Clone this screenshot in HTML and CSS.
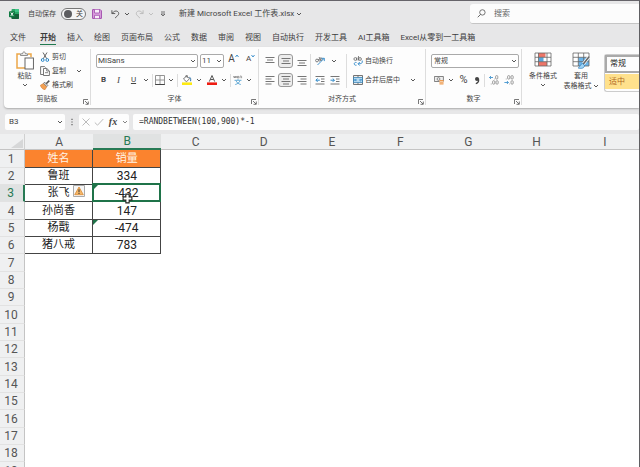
FILE: index.html
```html
<!DOCTYPE html>
<html lang="zh-CN">
<head>
<meta charset="utf-8">
<title>新建 Microsoft Excel 工作表.xlsx</title>
<link rel="stylesheet" href="styles.css">
</head>
<body>
<svg class="defs" aria-hidden="true">
  <symbol id="chev" viewBox="0 0 6 6"><path d="M1 2l2 2 2-2" fill="none" stroke="currentColor" stroke-width=".9"/></symbol>
  <symbol id="launch" viewBox="0 0 6 6"><path d="M.5 5V.5H5M2 2l3 3M5.300 2.500V5.300H2.500" fill="none" stroke="#555" stroke-width=".8"/></symbol>
</svg>
<div class="app">
  <header class="titlebar">
    <svg class="logo" viewBox="0 0 10 10"><rect x="2.500" width="7.500" height="10" rx="1" fill="#27a565"/><path d="M6 0h3a1 1 0 011 1v2H6z" fill="#3ec486"/><path d="M2.500 5H10v4a1 1 0 01-1 1H3.500a1 1 0 01-1-1z" fill="#15613a"/><rect y="2.200" width="6" height="6" rx=".8" fill="#0f7a42"/><path d="M1.800 3.500l2.400 3.400M4.200 3.500L1.800 6.900" stroke="#fff" stroke-width=".9"/></svg>
    <label class="autosave">自动保存<input type="checkbox" class="switch-input"><span class="switch"><i></i>关</span></label>
    <button class="qat save" aria-label="保存"><svg viewBox="0 0 10 10"><path d="M.6.6h7.600l1.200 1.200v7.600H.6z" fill="#dda4df" stroke="#a04bad" stroke-width="1"/><path d="M2.500.8v3.200h5V.8M2.500 9.300V6.300h5v3" fill="#f8eef8" stroke="#a04bad" stroke-width=".8"/></svg></button>
    <button class="qat" aria-label="撤消"><svg viewBox="0 0 10 10"><path d="M1 .8v3.700h3.700M1.200 4.300C3 2 5.300.9 7.300 2.200 9.300 3.700 8.700 5.600 7.300 6.900L4.500 9.500" fill="none" stroke="#505050"/></svg></button>
    <button class="chev" aria-label="撤消选项"><svg><use href="#chev"/></svg></button>
    <button class="qat off" aria-label="恢复"><svg viewBox="0 0 10 10"><path d="M9 .8v3.700H5.300M8.800 4.300C7 2 4.700.9 2.700 2.200.7 3.700 1.300 5.600 2.700 6.900L5.500 9.500" fill="none" stroke="#b9b9b9"/></svg></button>
    <button class="chev off" aria-label="恢复选项"><svg><use href="#chev"/></svg></button>
    <button class="chev custom" aria-label="自定义快速访问工具栏"><svg viewBox="0 0 6 6"><path d="M1 1h4M1 3h4L3 5z" fill="none" stroke="#555" stroke-width=".8"/></svg></button>
    <button class="filename">新建 Microsoft Excel 工作表.xlsx<svg><use href="#chev"/></svg></button>
    <label class="search"><svg viewBox="0 0 10 10"><circle cx="6" cy="3.800" r="3" fill="none" stroke="#555" stroke-width=".9"/><path d="M4 6L.8 9.200" stroke="#555"/></svg><input type="search" placeholder="搜索" aria-label="搜索"></label>
  </header>

  <nav class="tabs">
    <a href="#" class="file">文件</a><a href="#" class="active">开始</a><a href="#">插入</a><a href="#">绘图</a><a href="#">页面布局</a><a href="#">公式</a><a href="#">数据</a><a href="#">审阅</a><a href="#">视图</a><a href="#">自动执行</a><a href="#">开发工具</a><a href="#">AI工具箱</a><a href="#">Excel从零到一工具箱</a>
  </nav>

  <section class="ribbon">
    <div class="group clipboard">
      <div class="body">
        <button class="big"><svg viewBox="0 0 18 19"><path d="M4 3H1v14h8M12 3h3v3" fill="none" stroke="#eba648" stroke-width="1.500"/><path d="M4.500 4.500V2.800h2C6.500.3 9.500.3 9.500 2.800h2v1.700z" fill="#eee" stroke="#777" stroke-width=".8"/><rect x="9" y="7" width="8.400" height="11" fill="#fff" stroke="#555" stroke-width=".9"/></svg><span>粘贴</span><svg class="v"><use href="#chev"/></svg></button>
        <div class="stack">
          <button class="cmd"><svg viewBox="0 0 10 10"><path d="M3 .5l3.800 6.300M7 .5L3.200 6.800" stroke="#555" stroke-width=".9"/><circle cx="2.700" cy="8" r="1.400" fill="none" stroke="#2b87c8"/><circle cx="7.300" cy="8" r="1.400" fill="none" stroke="#2b87c8"/></svg>剪切</button>
          <button class="cmd"><svg viewBox="0 0 10 10"><path d="M3 8.500H.6V.6h4l1 1" fill="none" stroke="#555" stroke-width=".8"/><path d="M3.500 2.500h3.300L9.400 5v4.500H3.500z" fill="#fff" stroke="#555" stroke-width=".8"/><path d="M6.700 2.600V5h2.600M5 6.700h3" fill="none" stroke="#555" stroke-width=".7"/></svg>复制<svg class="v far"><use href="#chev"/></svg></button>
          <button class="cmd"><svg viewBox="0 0 10 10"><path d="M.4 5.300l3.100-1.800 3.300 3.200L5 9.700C3 9.700.8 7.500.4 5.300z" fill="#f2a052" stroke="#c96b22" stroke-width=".5"/><path d="M3.600 3.200l1-1 3.200 3.200-1 1z" fill="#fff" stroke="#555" stroke-width=".8"/><path d="M6.200 3.700L9.300.6" stroke="#555" stroke-width="1.600"/></svg>格式刷</button>
        </div>
      </div>
      <footer>剪贴板<button class="launcher" aria-label="剪贴板设置"><svg><use href="#launch"/></svg></button></footer>
    </div>

    <div class="group font">
      <div class="body rows">
        <div class="row top">
          <span class="combo family"><select aria-label="字体"><option>MiSans</option></select><svg><use href="#chev"/></svg></span>
          <span class="combo size"><select aria-label="字号"><option>11</option></select><svg><use href="#chev"/></svg></span>
          <button class="tool wide grow" aria-label="增大字号">A<svg viewBox="0 0 4 4"><path d="M.5 3L2 1l1.500 2" fill="none" stroke="#2b87c8" stroke-width=".9"/></svg></button>
          <button class="tool wide shrink" aria-label="减小字号">A<svg viewBox="0 0 4 4"><path d="M.5 1L2 3l1.500-2" fill="none" stroke="#2b87c8" stroke-width=".9"/></svg></button>
        </div>
        <div class="row">
          <button class="tool bold">B</button><button class="tool italic">I</button><button class="tool under">U</button><button class="chev" aria-label="下划线样式"><svg><use href="#chev"/></svg></button>
          <i class="sep"></i>
          <button class="tool slim" aria-label="边框"><svg viewBox="0 0 10 10"><path d="M.5.5h9v9h-9zM5 .5v9M.5 5h9" fill="none" stroke="#888" stroke-width=".9"/><path d="M.2 9.500h9.600" stroke="#444"/></svg></button><button class="chev" aria-label="边框样式"><svg><use href="#chev"/></svg></button>
          <i class="sep"></i>
          <button class="tool" aria-label="填充颜色"><svg viewBox="0 0 10 10"><path d="M4.300 1L1.500 4l3 2.800L7.600 3.600z" fill="#fff" stroke="#555" stroke-width=".8"/><path d="M4 2.300V.3h1.300v2.500" fill="none" stroke="#555" stroke-width=".6"/><path d="M7.400 2.300c1.300 0 1.500 2 1.200 3.900" fill="none" stroke="#2b6fa8"/><path d="M0 7.400h10V10H0z" fill="#fdea12"/></svg></button><button class="chev" aria-label="选择填充颜色"><svg><use href="#chev"/></svg></button>
          <button class="tool" aria-label="字体颜色"><svg viewBox="0 0 10 10"><path d="M2.300 6.600L5 .5l2.700 6.100M3.300 4.500h3.400" fill="none" stroke="#555"/><path d="M0 7.400h10V10H0z" fill="#ee1c12"/></svg></button><button class="chev" aria-label="选择字体颜色"><svg><use href="#chev"/></svg></button>
          <i class="sep"></i>
          <button class="tool slim" aria-label="拼音"><svg viewBox="0 0 10 10"><path d="M.5 1l.8 2 .8-2 .8 2 .6-2M4.200 2.200h1.600c0-1.600-1.600-1.300-1.600 0s1.200 1 1.600.6M7 3.200V1.400c.8-.8 1.600-.4 1.600.3v1.500" fill="none" stroke="#777" stroke-width=".7"/><path d="M1.500 5.300h7M5 4.200v1M3 5.500c.7 2 2.300 3.500 4.800 4M7 5.500c-.7 2-2.300 3.500-4.800 4" fill="none" stroke="#5aa5d2" stroke-width=".9"/></svg></button><button class="chev" aria-label="拼音选项"><svg><use href="#chev"/></svg></button>
        </div>
      </div>
      <footer>字体<button class="launcher" aria-label="字体设置"><svg><use href="#launch"/></svg></button></footer>
    </div>

    <div class="group align">
      <div class="body">
        <div class="rows">
          <div class="row top gap">
            <button class="tool" aria-label="顶端对齐"><svg viewBox="0 0 10 10"><path d="M.5 1.500h9M2 4h6M.5 6.500h9" stroke="#666" stroke-width=".9"/></svg></button>
            <button class="tool on" aria-label="垂直居中"><svg viewBox="0 0 10 10"><path d="M.5 2.500h9M2 5h6M.5 7.500h9" stroke="#666" stroke-width=".9"/></svg></button>
            <button class="tool" aria-label="底端对齐"><svg viewBox="0 0 10 10"><path d="M.5 4.500h9M2 7h6M.5 9.500h9" stroke="#666" stroke-width=".9"/></svg></button>
          </div>
          <div class="row gap">
            <button class="tool" aria-label="左对齐"><svg viewBox="0 0 10 10"><path d="M.5 1.500h9M.5 4h6M.5 6.500h9M.5 9h6" stroke="#666" stroke-width=".9"/></svg></button>
            <button class="tool on" aria-label="居中"><svg viewBox="0 0 10 10"><path d="M.5 1.500h9M2 4h6M.5 6.500h9M2 9h6" stroke="#666" stroke-width=".9"/></svg></button>
            <button class="tool" aria-label="右对齐"><svg viewBox="0 0 10 10"><path d="M.5 1.500h9M3.500 4h6M.5 6.500h9M3.500 9h6" stroke="#666" stroke-width=".9"/></svg></button>
          </div>
        </div>
        <i class="sep tall"></i>
        <div class="rows indent">
          <div class="row top">
            <button class="tool" aria-label="方向"><svg viewBox="0 0 10 10"><circle cx="2" cy="4.500" r="1.400" fill="none" stroke="#666" stroke-width=".8"/><path d="M3.200 3l1.300 2.500M4 1l2 3.500" stroke="#666" stroke-width=".8"/><circle cx="5.900" cy="3.200" r="1.300" fill="none" stroke="#666" stroke-width=".8"/><path d="M2.500 9L9 2.500M6.500 2.300h2.800v2.800" fill="none" stroke="#2b87c8" stroke-width=".9"/></svg></button><button class="chev" aria-label="方向选项"><svg><use href="#chev"/></svg></button>
          </div>
          <div class="row">
            <button class="tool" aria-label="减少缩进"><svg viewBox="0 0 10 10"><path d="M.5 1.500h9M6 4h3.500M6 6.500h3.500M.5 9h9" stroke="#666" stroke-width=".9"/><path d="M4.800 5.200H1M2.600 3.500L.9 5.200l1.700 1.700" fill="none" stroke="#2b87c8"/></svg></button>
            <button class="tool" aria-label="增加缩进"><svg viewBox="0 0 10 10"><path d="M.5 1.500h9M6 4h3.500M6 6.500h3.500M.5 9h9" stroke="#666" stroke-width=".9"/><path d="M.5 5.200h3.800M2.700 3.500l1.700 1.700-1.700 1.700" fill="none" stroke="#2b87c8"/></svg></button>
          </div>
        </div>
        <i class="sep tall"></i>
        <div class="rows merge">
          <div class="row top"><button class="cmd"><svg viewBox="0 0 10 10"><circle cx="2.300" cy="3" r="1.400" fill="none" stroke="#666" stroke-width=".8"/><path d="M3.900 1.500v3M5.500 0v4.500" stroke="#666" stroke-width=".8"/><circle cx="7" cy="3" r="1.400" fill="none" stroke="#666" stroke-width=".8"/><path d="M3.500 6.500c-3-.8-3 3.300 0 2.700M9.200 4.500c.6 3-1 3.300-4 3.300M6.800 6L5 7.800l1.800 1.800" fill="none" stroke="#2b87c8" stroke-width=".9"/></svg>自动换行</button></div>
          <div class="row"><button class="cmd"><svg viewBox="0 0 10 10"><path d="M.5.5h9v9h-9zM5 .5v2M5 7.500v2" fill="#eee" stroke="#666" stroke-width=".9"/><path d="M.5 2.600h9v4.800h-9z" fill="#c6e3f7" stroke="#2b7bb0" stroke-width=".8"/><path d="M1.500 5h2.700M5.800 5h2.700M2.600 3.900L1.500 5l1.100 1.100M7.400 3.900L8.500 5 7.400 6.100" fill="none" stroke="#1878bd" stroke-width=".8"/></svg>合并后居中<svg class="v far"><use href="#chev"/></svg></button></div>
        </div>
      </div>
      <footer>对齐方式<button class="launcher" aria-label="对齐设置"><svg><use href="#launch"/></svg></button></footer>
    </div>

    <div class="group number">
      <div class="body rows">
        <div class="row top"><span class="combo format"><select aria-label="数字格式"><option>常规</option></select><svg><use href="#chev"/></svg></span></div>
        <div class="row">
          <button class="tool" aria-label="会计数字格式"><svg viewBox="0 0 10 10"><path d="M.4 1.500h9v5h-9z" fill="#eee" stroke="#666" stroke-width=".8"/><circle cx="4.500" cy="4" r="1.400" fill="none" stroke="#666" stroke-width=".7"/><path d="M5.500 5h4v4.500h-4z" fill="#ee9a4d"/><path d="M5.500 6.500h4M5.500 8h4" stroke="#fff" stroke-width=".5"/></svg></button><button class="chev" aria-label="货币选项"><svg><use href="#chev"/></svg></button>
          <button class="tool percent">%</button><button class="tool slim" aria-label="千位分隔样式"><svg viewBox="0 0 10 10"><circle cx="5" cy="4" r="2" fill="#444"/><path d="M6.500 3.500C7 6 6 8 3.800 8.700" fill="none" stroke="#444" stroke-width="1.200"/></svg></button>
          <i class="sep"></i>
          <button class="tool" aria-label="增加小数位数"><svg viewBox="0 0 10 10"><path d="M4 2.500H.5M2 1L.5 2.500 2 4" fill="none" stroke="#2b87c8" stroke-width=".8"/><g fill="none" stroke="#777" stroke-width=".7"><rect x="6.600" y=".6" width="2.200" height="3.500" rx="1"/><rect x="3.600" y="5.700" width="2.200" height="3.500" rx="1"/><rect x="7" y="5.700" width="2.200" height="3.500" rx="1"/><path d="M1.800 9h.8M5 4h.6"/></g></svg></button>
          <button class="tool" aria-label="减少小数位数"><svg viewBox="0 0 10 10"><path d="M.4 7.500H4.300M2.900 6l1.500 1.500L2.900 9" fill="none" stroke="#2b87c8" stroke-width=".8"/><g fill="none" stroke="#777" stroke-width=".7"><rect x="3.600" y=".6" width="2.200" height="3.500" rx="1"/><rect x="7" y=".6" width="2.200" height="3.500" rx="1"/><rect x="7" y="5.700" width="2.200" height="3.500" rx="1"/><path d="M1.800 4h.8M5.400 9h.6"/></g></svg></button>
        </div>
      </div>
      <footer>数字<button class="launcher" aria-label="数字设置"><svg><use href="#launch"/></svg></button></footer>
    </div>

    <div class="group styles">
      <div class="body">
        <button class="big"><svg viewBox="0 0 18 19"><path d="M1 2h16v13H1z" fill="#fff"/><path d="M4.500 2h7v4.300h-7zM4.500 10.700H13V15H4.500z" fill="#ec7568"/><path d="M4.500 6.300h5v4.400h-5z" fill="#58a7dc"/><path d="M1 2h16v13H1zM1 6.300h16M1 10.700h16M4.500 2v13M13 2v13" fill="none" stroke="#666" stroke-width=".8"/></svg><span>条件格式</span><svg class="v"><use href="#chev"/></svg></button>
        <button class="big"><svg viewBox="0 0 18 19"><path d="M1 2h16v13H1z" fill="#fff"/><path d="M6.300 6.300H17V15H6.300z" fill="#69b4ea"/><path d="M1 2h16v13H1zM1 6.300h16M1 10.700h16M6.300 2v13M11.700 2v13" fill="none" stroke="#666" stroke-width=".8"/><path d="M17.300 5.500l-6 7.500" stroke="#fff" stroke-width="3"/><path d="M17.300 5.500l-6 7.500" stroke="#666" stroke-width="1.600"/><path d="M10.500 12.500c-2 .2-2 3-4.300 4.500 3 1 6.400.3 6.300-2.800z" fill="#9ed3f5" stroke="#2b79b5" stroke-width=".7"/></svg><span>套用</span><span class="line">表格格式<svg><use href="#chev"/></svg></span></button>
        <div class="gallery"><button class="normal">常规</button><button class="neutral">适中</button></div>
      </div>
    </div>
  </section>

  <section class="formula">
    <label class="field name"><input value="B3" aria-label="名称框"><svg><use href="#chev"/></svg></label>
    <svg class="dots" viewBox="0 0 4 10"><path d="M1.300 1h1.400v1.400H1.300zM1.300 4.300h1.400v1.400H1.300zM1.300 7.600h1.400V9H1.300z" fill="#555"/></svg>
    <div class="field actions">
      <button aria-label="取消"><svg viewBox="0 0 10 10"><path d="M1.500 1.500l7 7M8.500 1.500l-7 7" stroke="#bbb"/></svg></button>
      <button aria-label="输入"><svg viewBox="0 0 10 10"><path d="M.8 5.500l2.700 2.700L9.300 2" fill="none" stroke="#bbb"/></svg></button>
      <button class="fx">fx</button>
      <svg class="v"><use href="#chev"/></svg>
    </div>
    <input class="field expr" value="=RANDBETWEEN(100,900)*-1" aria-label="编辑栏">
  </section>

  <main class="sheet">
    <table>
      <thead><tr><th class="corner"><svg viewBox="0 0 12 9"><path d="M12 0v9H0z" fill="#d6d7d8"/></svg></th><th>A</th><th class="cur">B</th><th>C</th><th>D</th><th>E</th><th>F</th><th>G</th><th>H</th><th>I</th></tr></thead>
      <tbody>
        <tr class="head"><th>1</th><td>姓名</td><td>销量</td></tr>
        <tr class="data"><th>2</th><td>鲁班</td><td>334</td></tr>
        <tr class="data"><th class="cur">3</th><td>张飞</td><td class="selected flag">-432<svg class="warn" viewBox="0 0 12 12"><path d="M.5.5h11v11H.5z" fill="#f6f6f6" stroke="#aaa"/><path d="M6 2L10.300 9.700H1.700z" fill="#f5b667" stroke="#d98a35" stroke-width=".8"/><path d="M6 4.300v3M6 8v1" stroke="#333"/></svg><svg class="pointer" viewBox="0 0 10 10"><path d="M3.500 1h3v2.500H9v3H6.500V9h-3V6.500H1v-3h2.500z" fill="#fff" stroke="#222"/></svg></td></tr>
        <tr class="data"><th>4</th><td>孙尚香</td><td>147</td></tr>
        <tr class="data"><th>5</th><td>杨戬</td><td class="flag">-474</td></tr>
        <tr class="data"><th>6</th><td>猪八戒</td><td>783</td></tr>
        <tr><th>7</th></tr><tr><th>8</th></tr><tr><th>9</th></tr><tr><th>10</th></tr><tr><th>11</th></tr><tr><th>12</th></tr><tr><th>13</th></tr><tr><th>14</th></tr><tr><th>15</th></tr><tr><th>16</th></tr><tr><th>17</th></tr><tr><th>18</th></tr><tr><th>19</th></tr>
      </tbody>
    </table>
  </main>
</div>
</body>
</html>
```
FILE: styles.css
```css
* { box-sizing: border-box; }
html, body { height: 100%; }
body {
  margin: 0;
  overflow: hidden;
  font: 7px/10px Roboto, "Noto Sans CJK SC", sans-serif;
  color: #444;
}
button, input, select { font: inherit; color: inherit; border: 0; padding: 0; margin: 0; background: none; outline: 0; }
button { display: flex; align-items: center; justify-content: center; white-space: nowrap; }
svg { display: block; flex: none; width: 6px; height: 6px; }
i { font-style: normal; }
.defs { position: absolute; width: 0; height: 0; }
.app {
  display: flex;
  flex-direction: column;
  height: 100vh;
  overflow: hidden;
  background: #e7e7e8;
  border-top: 1px solid #66646a;
  border-right: 1px solid #5f5f62;
}

/* title bar */
.titlebar { display: flex; align-items: center; height: 26px; padding-left: 9px; flex: none; }
.logo { width: 10px; height: 10px; }
.autosave { display: flex; align-items: center; margin-left: 9px; gap: 5px; }
.switch-input { position: absolute; opacity: 0; width: 1px; height: 1px; }
.switch { display: flex; align-items: center; gap: 4px; width: 25px; height: 12px; padding-left: 2px; border: 1px solid #777; border-radius: 6px; background: #f5f5f5; }
.switch i { width: 8px; height: 8px; border-radius: 50%; background: #5d5d60; }
.qat { width: 14px; height: 14px; }
.qat svg { width: 9px; height: 10px; }
.save { margin: 0 4px; }
.save svg { width: 10px; }
.chev { width: 10px; height: 14px; }
.off { color: #bbb; }
.custom { margin-left: 2px; }
.filename { margin-left: 11px; font-size: 8px; gap: 2px; }
.search { display: flex; align-items: center; gap: 8px; margin-left: auto; width: 169px; height: 20px; padding-left: 7px; background: #fcfcfc; border-radius: 3px 0 0 3px; border-bottom: 1px solid #c5c5c5; }
.search svg { width: 9px; height: 9px; }
.search input { flex: 1; min-width: 0; font-size: 8px; }
.search input::placeholder { color: #666; opacity: 1; }

/* tabs */
.tabs { display: flex; flex: none; gap: 11px; height: 20px; padding: 5px 10px 0; font-size: 8px; line-height: 11px; white-space: nowrap; }
.tabs a { height: 13px; color: #3c3c3c; text-decoration: none; }
.tabs .file { margin-right: 3px; }
.tabs .active { font-weight: 700; border-bottom: 1px solid #217a50; }

/* ribbon */
.ribbon { display: flex; flex: none; height: 61px; margin-left: 4px; padding: 2px 0 3px; background: #fdfdfd; border-radius: 4px 0 0 4px; box-shadow: 0 1px 2px #aaa; }
.group { position: relative; display: flex; flex-direction: column; flex: none; border-right: 1px solid #ddd; }
.body { display: flex; flex: 1; }
.group footer { height: 12px; line-height: 12px; text-align: center; }
.launcher { position: absolute; right: 1px; bottom: 0; }
.clipboard { width: 87px; }
.font { width: 168px; }
.align { width: 167px; }
.number { width: 96px; }
.styles { flex: 1; border: 0; }
.big { flex-direction: column; justify-content: flex-start; padding-top: 2px; line-height: 10px; }
.big > svg:first-child { width: 18px; height: 19px; margin-bottom: 1px; }
.big .v { margin-top: 1px; }
.clipboard .big { width: 42px; padding-right: 1px; }
.stack { display: flex; flex-direction: column; justify-content: space-between; padding: 1px 0; }
.cmd { justify-content: flex-start; height: 14px; gap: 2px; }
.cmd > svg:first-child { width: 10px; height: 10px; }
.stack .cmd { margin-left: -6px; }
.far { margin-left: 8px; }
.rows { display: flex; flex-direction: column; gap: 5px; padding-top: 5px; }
.row { display: flex; align-items: center; height: 14px; }
.font .rows { padding-left: 5px; }
.top { gap: 2px; }
.gap { gap: 1px; }
.combo { position: relative; display: flex; align-items: center; height: 14px; border: 1px solid #aaa; border-radius: 2px; background: #fff; }
.combo select { appearance: none; width: 100%; height: 12px; padding: 0 1px; }
.combo svg { position: absolute; right: 1px; top: 3px; pointer-events: none; }
.family { width: 102px; font-size: 8px; }
.size { width: 24px; font-size: 8px; }
.format { width: 88px; }
.format select { padding-left: 2px; }
.tool { width: 15px; height: 14px; font-size: 8px; border-radius: 3px; }
.tool svg { width: 10px; height: 10px; }
.slim { width: 12px; }
.on { border: 1px solid #999; background: #ededed; }
.grow, .shrink { align-items: flex-start; }
.grow { font-size: 10px; }
.tool.grow svg, .tool.shrink svg { width: 4px; height: 4px; }
.bold { font-weight: 700; }
.italic { font-family: "Liberation Serif", serif; font-style: italic; font-size: 9px; }
.under { text-decoration: underline; }
.percent { font-size: 11px; }
.sep { width: 1px; height: 13px; margin: 0 1px; background: #ddd; }
.tall { height: 34px; margin-top: 5px; }
.align .body { padding-left: 3px; }
.indent { width: 33px; }
.merge { padding-left: 5px; }
.number .rows { padding-left: 5px; }
.styles .body { padding-left: 3px; gap: 2px; }
.styles .big { width: 36px; }
.line { display: flex; align-items: center; gap: 1px; }
.gallery { display: flex; flex-direction: column; gap: 1px; flex: 1; margin: 5px 0 0 3px; height: 38px; padding: 0; border: 1px solid #ccc; border-right: 0; border-radius: 3px 0 0 3px; font-size: 8px; }
.gallery button { height: 18px; justify-content: flex-start; padding-left: 4px; }
.gallery .normal { border: 2px solid #aaa; border-right: 0; padding-left: 3px; color: #222; }
.gallery .neutral { height: 15px; background: #ffe18c; color: #b0671e; }

/* formula bar */
.formula { display: flex; align-items: center; flex: none; height: 26px; padding: 1px 0 0 5px; }
.field { height: 16px; background: #fdfdfd; border-radius: 2px; }
.name { display: flex; align-items: center; width: 60px; padding: 0 2px 0 4px; font-size: 8px; }
.name input { flex: 1; min-width: 0; }
.dots { width: 4px; height: 8px; margin: 0 5px; }
.actions { display: flex; align-items: center; width: 50px; padding-left: 2px; gap: 3px; }
.actions button svg { width: 10px; height: 10px; }
.actions .fx { width: 12px; font: italic 700 10px/12px "Liberation Serif", serif; }
.actions .v { color: #777; }
.expr { flex: 1; min-width: 0; margin-left: 4px; padding-left: 6px; font: 8px/16px "DejaVu Sans Mono", monospace; color: #333; }

/* sheet */
.sheet { flex: 1; min-height: 0; overflow: hidden; background: #fff; }
table { width: 100%; table-layout: fixed; border-collapse: separate; border-spacing: 0; font: 12px/16px Roboto, "Noto Sans CJK SC", sans-serif; color: #222; }
th, td { position: relative; height: 17px; padding: 0; font-weight: 400; text-align: center; }
tbody tr:nth-child(3n+1) > * { height: 18px; }
th { background: #eff0f1; color: #555; }
thead th { height: 16px; line-height: 14px; border-bottom: 1px solid #c4c4c4; }
thead .corner { width: 25px; border-right: 1px solid #d0d0d0; }
.corner svg { width: 12px; height: 9px; margin: 4px 0 0 11px; }
tbody th { border-right: 1px solid #c4c4c4; border-bottom: 1px solid #e2e2e2; padding-right: 2px; }
thead .cur { background: #e0e2e2; color: #277a54; border-bottom: 2px solid #277a54; }
tbody .cur { background: #e0e2e2; color: #277a54; border-right: 2px solid #277a54; }
td { border-right: 1px solid #444; border-bottom: 1px solid #444; }
.head td { background: #fb832e; color: #fff4e6; font-size: 11px; }
.data td:nth-child(2) { font-size: 11px; }
.selected::before { content: ""; position: absolute; inset: -2px -1px -1px -1px; border: 2px solid #1f7349; }
.flag::after { content: ""; position: absolute; left: 0; top: 0; border-top: 5px solid #1f7349; border-right: 5px solid transparent; }
.warn { position: absolute; left: -20px; top: 0; width: 12px; height: 12px; }
.pointer { position: absolute; left: 29px; top: 8px; width: 11px; height: 11px; }
```
